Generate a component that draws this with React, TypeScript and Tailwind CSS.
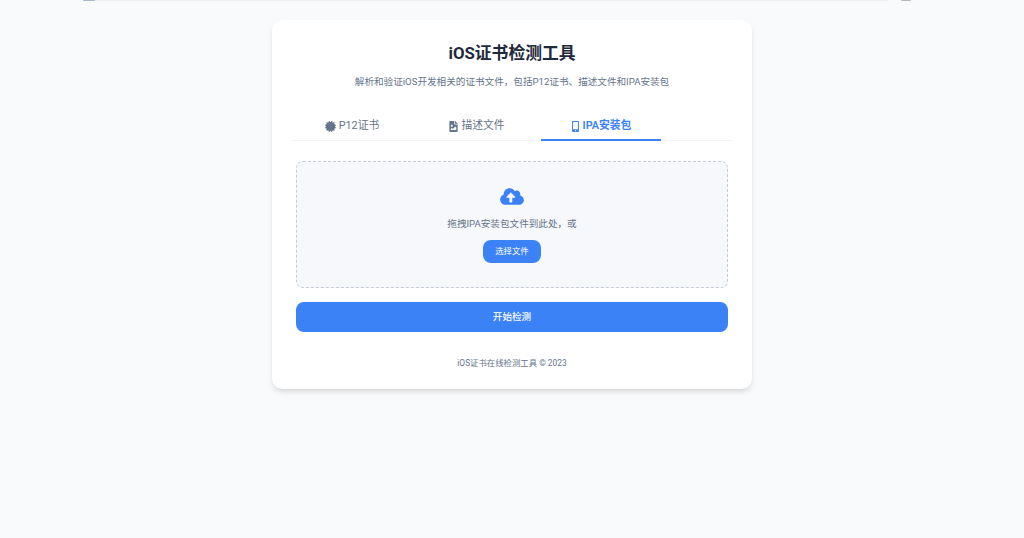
import { FaCertificate, FaFileImage, FaMobileAlt, FaCloudUploadAlt } from "react-icons/fa";

const font = "font-['Roboto','Noto_Sans_CJK_SC',sans-serif]";

export default function App() {
  return (
    <div className={`relative min-h-[538px] bg-[#f8fafc] pt-5 ${font}`}>
      <div className="absolute left-[95px] top-0 h-px w-[794px] bg-[#eef1f5]" />
      <div className="absolute left-[83px] top-0 h-px w-[12px] rounded-b bg-[#a9b7cc]" />
      <div className="absolute left-[901px] top-0 h-px w-[10px] rounded-b bg-[#b4b8be]" />
      <main className="mx-auto flex h-[369px] w-[480px] flex-col rounded-[10px] bg-white px-5 pt-[23px] shadow-[0_4px_6px_-1px_rgba(0,0,0,0.1),0_2px_4px_-2px_rgba(0,0,0,0.1)]">
        <h1 className="text-center text-[16.8px] font-bold leading-[20px] text-[#1e293b]">iOS证书检测工具</h1>
        <p className="mt-[11px] text-center text-[9.6px] leading-[15px] text-[#64748b]">
          解析和验证iOS开发相关的证书文件，包括P12证书、描述文件和IPA安装包
        </p>
        <nav className="mt-[20px] flex gap-[5px] border-b border-[#f1f5f9] text-[10.8px]">
          <button className="flex h-[31px] w-[120px] items-center justify-center gap-[3px] pt-1 text-[#64748b]">
            <FaCertificate className="h-[11px] w-[11px]" />
            P12证书
          </button>
          <button className="flex h-[31px] w-[120px] items-center justify-center gap-[3px] pt-1 text-[#64748b]">
            <FaFileImage className="h-[11px] w-[9px]" />
            描述文件
          </button>
          <button className="-mb-px -ml-px flex h-[32px] w-[120px] items-center justify-center gap-[3px] border-b-2 border-[#3b82f6] pt-1 font-semibold text-[#3b82f6]">
            <FaMobileAlt className="h-[11px] w-[9px]" />
            IPA安装包
          </button>
        </nav>
        <div className="mx-1 mt-[20px] flex h-[127px] flex-col items-center rounded-[7px] border border-dashed border-[#c3ccd8] bg-[#f6f8fb] pt-[25px]">
          <FaCloudUploadAlt className="h-[19px] w-[24px] text-[#3b82f6]" />
          <p className="mt-[10px] text-[9.6px] leading-[15px] text-[#64748b]">拖拽IPA安装包文件到此处，或</p>
          <button className="mt-[9px] h-[23px] w-[58px] rounded-lg bg-[#3b82f6] text-[8.4px] text-white">选择文件</button>
        </div>
        <button className="mx-1 mt-[14px] h-[30px] rounded-lg bg-[#3b82f6] pt-px text-[9.6px] font-medium text-white">开始检测</button>
        <footer className="mt-[24px] text-center text-[8.4px] leading-[14px] text-[#64748b]">iOS证书在线检测工具 © 2023</footer>
      </main>
    </div>
  );
}
